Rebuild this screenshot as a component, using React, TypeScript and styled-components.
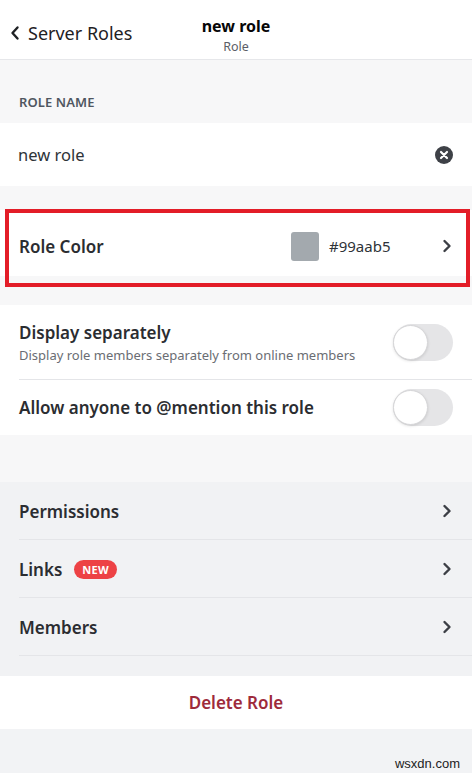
import React from "react";
import styled, { createGlobalStyle } from "styled-components";

const Global = createGlobalStyle`
  * { box-sizing: border-box; }
  html, body { margin: 0; padding: 0; background: #f2f3f5; }
  body { font-family: "Noto Sans", "Open Sans", sans-serif; color: #2e3338; }
`;

const Page = styled.div`
  width: 472px;
  min-height: 773px;
  background: #f2f3f5;
  display: flex;
  flex-direction: column;
`;

const Header = styled.header`
  height: 60px;
  background: #fff;
  border-bottom: 1px solid #e6e7ea;
  display: grid;
  grid-template-columns: 1fr auto 1fr;
  align-items: center;
`;

const Back = styled.div`
  display: flex;
  align-items: center;
  gap: 8px;
  padding-left: 10px;
  font-size: 18px;
  color: #1f2124;
  margin-top: 6px;
`;

const TitleBlock = styled.div`
  display: flex;
  flex-direction: column;
  align-items: center;
  margin-top: 12px;
`;

const Title = styled.div`
  font-weight: 700;
  font-size: 16px;
  line-height: 19px;
  color: #060607;
`;

const Subtitle = styled.div`
  font-size: 12.5px;
  line-height: 15px;
  color: #5c5e66;
  margin-top: 3px;
`;

const SectionLabel = styled.div`
  background: #f7f7f8;
  padding: 34px 19px 13px;
  font-size: 13px;
  font-weight: 600;
  color: #4f5660;
  letter-spacing: 0.1px;
  line-height: 16px;
`;

const InputRow = styled.div`
  height: 63px;
  background: #fff;
  display: flex;
  align-items: center;
  justify-content: space-between;
  padding: 0 19px 0 18px;
  font-size: 16.5px;
  color: #2e3338;
`;

const Gap = styled.div<{ $h: number; $bg?: string }>`
  height: ${(p) => p.$h}px;
  background: ${(p) => p.$bg || "#f7f7f8"};
`;

const Highlight = styled.div`
  position: relative;
  background: #f7f7f8;
  padding-bottom: 29px;
  &::after {
    content: "";
    position: absolute;
    left: 5px;
    right: 2px;
    top: -1px;
    bottom: 18px;
    border: 4px solid #e31d28;
    pointer-events: none;
  }
`;

const Row = styled.div<{ $h: number; $bg?: string; $sep?: boolean; $pt?: number }>`
  height: ${(p) => p.$h}px;
  background: ${(p) => p.$bg || "#fff"};
  display: flex;
  align-items: center;
  padding: ${(p) => p.$pt || 0}px 20px 0 19px;
  gap: 10px;
  position: relative;
  ${(p) =>
    p.$sep
      ? `&::after { content: ""; position: absolute; left: 19px; right: 0; bottom: 0; height: 1px; background: #e4e5e8; }`
      : ""}
`;

const Label = styled.div`
  font-size: 17px;
  font-weight: 600;
  color: #2b2d31;
  flex: 1;
  display: flex;
  align-items: center;
  gap: 12px;
`;

const TextCol = styled.div`
  flex: 1;
  display: flex;
  flex-direction: column;
  gap: 2px;
`;

const Sub = styled.div`
  font-size: 13px;
  color: #6a6d73;
`;

const Swatch = styled.div<{ $c: string }>`
  width: 28px;
  height: 29px;
  border-radius: 3px;
  background: ${(p) => p.$c};
`;

const Hex = styled.div`
  font-size: 15px;
  color: #2e3338;
  width: 103px;
`;

const WhiteGroup = styled.div`
  background: #fff;
`;

const GrayGroup = styled.div`
  background: #f1f2f4;
  padding-bottom: 20px;
`;

const Track = styled.div`
  width: 60px;
  height: 37px;
  border-radius: 19px;
  background: #e5e5e7;
  position: relative;
  margin-right: -1px;
`;

const Knob = styled.div`
  position: absolute;
  left: 0;
  top: 1px;
  width: 35px;
  height: 35px;
  border-radius: 50%;
  background: #fff;
  border: 1px solid #d6d6d8;
  box-shadow: 0 1px 3px rgba(0, 0, 0, 0.12);
`;

const Badge = styled.span`
  background: #ed4245;
  color: #fff;
  font-size: 11px;
  font-weight: 700;
  border-radius: 10px;
  height: 19px;
  padding: 0 8px;
  display: inline-flex;
  align-items: center;
  letter-spacing: 0.3px;
`;

const DeleteRow = styled.div`
  height: 53px;
  background: #fff;
  display: flex;
  align-items: center;
  justify-content: center;
  font-size: 17px;
  font-weight: 600;
  color: #9e2b3b;
`;

const Footer = styled.div`
  flex: 1;
  background: #f2f3f5;
  display: flex;
  justify-content: flex-end;
  align-items: flex-end;
  padding: 0 12px 2px 0;
  min-height: 44px;
`;

const Watermark = styled.div`
  font-family: "Liberation Sans", Arial, sans-serif;
  font-size: 13px;
  color: #222;
`;

const Chevron = () => (
  <svg width="10" height="14" viewBox="0 0 10 14">
    <path d="M2.5 2 L7.5 7 L2.5 12" fill="none" stroke="#3c3f45" strokeWidth="2.4" strokeLinecap="round" strokeLinejoin="round" />
  </svg>
);

const BackChevron = () => (
  <svg width="10" height="16" viewBox="0 0 10 16">
    <path d="M7.5 2.5 L2.5 8 L7.5 13.5" fill="none" stroke="#1f2124" strokeWidth="2.4" strokeLinecap="round" strokeLinejoin="round" />
  </svg>
);

const ClearIcon = () => (
  <svg width="18" height="18" viewBox="0 0 18 18">
    <circle cx="9" cy="9" r="9" fill="#3e4147" />
    <path d="M6 6 L12 12 M12 6 L6 12" stroke="#fff" strokeWidth="2.2" strokeLinecap="round" />
  </svg>
);

const Toggle = () => (
  <Track>
    <Knob />
  </Track>
);

export default function App() {
  return (
    <Page>
      <Global />
      <Header>
        <Back>
          <BackChevron />
          <span>Server Roles</span>
        </Back>
        <TitleBlock>
          <Title>new role</Title>
          <Subtitle>Role</Subtitle>
        </TitleBlock>
        <div />
      </Header>
      <SectionLabel>ROLE NAME</SectionLabel>
      <InputRow>
        <span>new role</span>
        <ClearIcon />
      </InputRow>
      <Gap $h={24} />
      <Highlight>
        <Row $h={66} $pt={6}>
          <Label>Role Color</Label>
          <Swatch $c="#a3a9ae" />
          <Hex>#99aab5</Hex>
          <Chevron />
        </Row>
      </Highlight>
      <WhiteGroup>
        <Row $h={75} $sep>
          <TextCol>
            <Label>Display separately</Label>
            <Sub>Display role members separately from online members</Sub>
          </TextCol>
          <Toggle />
        </Row>
        <Row $h={55}>
          <Label>Allow anyone to @mention this role</Label>
          <Toggle />
        </Row>
      </WhiteGroup>
      <Gap $h={47} />
      <GrayGroup>
        <Row $h={58} $bg="#f1f2f4" $sep>
          <Label>Permissions</Label>
          <Chevron />
        </Row>
        <Row $h={58} $bg="#f1f2f4" $sep>
          <Label>
            Links <Badge>NEW</Badge>
          </Label>
          <Chevron />
        </Row>
        <Row $h={58} $bg="#f1f2f4" $sep>
          <Label>Members</Label>
          <Chevron />
        </Row>
      </GrayGroup>
      <DeleteRow>Delete Role</DeleteRow>
      <Footer>
        <Watermark>wsxdn.com</Watermark>
      </Footer>
    </Page>
  );
}
